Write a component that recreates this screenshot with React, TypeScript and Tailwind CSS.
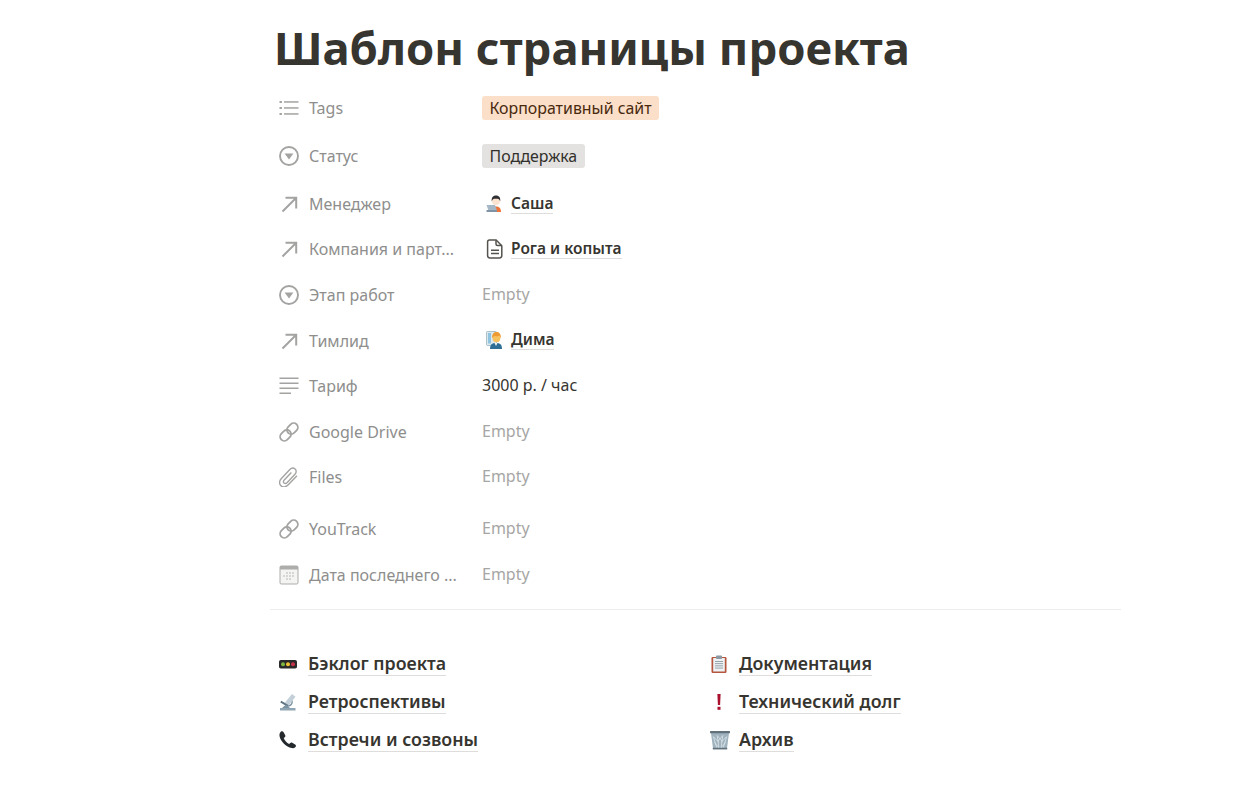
const gray = "#a3a3a1";

function ListIcon() {
  return (
    <svg viewBox="0 0 20 20" className="h-5 w-5" fill={gray}>
      <rect x="0.5" y="3" width="2.4" height="2" />
      <rect x="0.5" y="9" width="2.4" height="2" />
      <rect x="0.5" y="15" width="2.4" height="2" />
      <rect x="5" y="3.2" width="14.5" height="1.5" />
      <rect x="5" y="9.2" width="14.5" height="1.5" />
      <rect x="5" y="15.2" width="14.5" height="1.5" />
    </svg>
  );
}

function SelectIcon() {
  return (
    <svg viewBox="0 0 20 20" className="h-5 w-5" fill="none">
      <circle cx="10" cy="10" r="9" stroke={gray} strokeWidth="1.9" />
      <path d="M5.6 7.6h8.800L10 13.600z" fill={gray} />
    </svg>
  );
}

function ArrowIcon() {
  return (
    <svg viewBox="0 0 20 20" className="h-5 w-5" fill="none" stroke={gray} strokeWidth="2">
      <path d="M3.500 17.500 16.500 4.500M6.500 3.800h10.700v10.700" />
    </svg>
  );
}

function TextIcon() {
  return (
    <svg viewBox="0 0 20 20" className="h-5 w-5" fill={gray}>
      <rect x="0.5" y="1.5" width="19" height="1.5" />
      <rect x="0.5" y="6.5" width="19" height="1.5" />
      <rect x="0.5" y="11.5" width="19" height="1.5" />
      <rect x="0.5" y="16.5" width="11.5" height="1.5" />
    </svg>
  );
}

function LinkIcon() {
  return (
    <svg viewBox="0 0 20 20" className="h-5 w-5" fill="none" stroke={gray} strokeWidth="1.800">
      <rect x="7.400" y="2.400" width="12" height="8.400" rx="4.200" transform="rotate(-45 13.400 6.600)" />
      <rect x="0.600" y="9.200" width="12" height="8.400" rx="4.200" transform="rotate(-45 6.600 13.400)" />
    </svg>
  );
}

function ClipIcon() {
  return (
    <svg viewBox="1.500 1 17.500 17.500" className="h-5 w-5" fill="none" stroke={gray} strokeWidth="1.200">
      <path d="M17.200 8.600 9.400 16.800c-1.800 1.900-4.600 2.100-6.200.6-1.700-1.600-1.600-4.300.2-6.200l7.600-8c1.300-1.400 3.300-1.600 4.600-.4 1.300 1.200 1.200 3.200-.1 4.600l-7 7.300c-.8.800-1.900.9-2.600.3-.7-.7-.6-1.800.2-2.700l6.200-6.500" />
    </svg>
  );
}

function CalendarIcon() {
  return (
    <svg viewBox="0 0 20 20" className="h-5 w-5">
      <rect x="0.5" y="0.5" width="19" height="19" rx="2" fill="#adadab" />
      <rect x="1.500" y="4.500" width="17" height="14" fill="#f4f4f3" />
      <g fill="#d6d6d4">
        <rect x="7" y="7" width="2" height="2" />
        <rect x="10" y="7" width="2" height="2" />
        <rect x="13" y="7" width="2" height="2" />
        <rect x="4" y="10" width="2" height="2" />
        <rect x="7" y="10" width="2" height="2" />
        <rect x="10" y="10" width="2" height="2" />
        <rect x="13" y="10" width="2" height="2" />
        <rect x="7" y="13" width="2" height="2" />
        <rect x="10" y="13" width="2" height="2" />
      </g>
    </svg>
  );
}

function PageIcon() {
  return (
    <svg viewBox="0 0 20 20" className="h-5 w-5" fill="none" stroke="#55534e" strokeWidth="1.500">
      <path d="M4.500 1h6.600l5.700 5.800v9.800a2.400 2.400 0 0 1-2.400 2.400H5a2.400 2.400 0 0 1-2.400-2.400V3A2 2 0 0 1 4.500 1z" />
      <path d="M11 1.200v3.900a1.500 1.500 0 0 0 1.500 1.500h4.100M6 11.200h8M6 14.600h8" />
    </svg>
  );
}

function SashaEmoji() {
  return (
    <svg viewBox="0 0 18 18" className="h-[18px] w-[18px]">
      <path d="M5 17c0-4 2-5.500 5-5.500s5 1.500 5 5.500z" fill="#f0743a" />
      <circle cx="10" cy="6" r="4" fill="#fbe3d0" />
      <path d="M5.800 6.500C5 2 7.800.5 10 .5s5 1.500 4.200 6c-.5-1.700-1.500-2.500-2.500-2.700H8.300C7.300 4 6.300 4.800 5.800 6.500z" fill="#2f2f33" />
      <path d="M.5 10h8.500l2 5.500H2.500z" fill="#a5b6c4" />
      <rect x=".5" y="15" width="10.500" height="2" fill="#7f93a5" />
    </svg>
  );
}

function DimaEmoji() {
  return (
    <svg viewBox="0 0 18 18" className="h-[18px] w-[18px]">
      <rect x="0.500" y="0.500" width="10" height="14" rx="1" fill="#dbe8ee" stroke="#9cb4c0" strokeWidth="0.800" />
      <rect x="2" y="2" width="3" height="10.500" fill="#8fc3df" />
      <path d="M4 18c0-4.500 2-6 6-6s6 1.500 6 6z" fill="#2f6f96" />
      <path d="M8.500 12h3L10 15z" fill="#f4f4f4" />
      <circle cx="10.500" cy="7.500" r="3.800" fill="#f7c25e" />
      <path d="M6.200 7.500C5.500 2.800 8.300 1 10.500 1s5 1.800 4.300 6.500c-.5-1.500-1.200-2.500-2-2.800-1.500.7-3 .7-4.500.2-.9.500-1.600 1.300-2.100 2.600z" fill="#ed9a32" />
    </svg>
  );
}

function TrafficEmoji() {
  return (
    <svg viewBox="0 0 18 18" className="h-[18px] w-[18px]">
      <rect x="0" y="5" width="18" height="8.500" rx="1.800" fill="#2a2a2a" />
      <circle cx="4" cy="9.200" r="2" fill="#7fb83f" />
      <circle cx="9" cy="9.200" r="2" fill="#f1c232" />
      <circle cx="14" cy="9.200" r="2" fill="#c8334b" />
    </svg>
  );
}

function MicroscopeEmoji() {
  return (
    <svg viewBox="0 0 18 18" className="h-[18px] w-[18px]">
      <rect x="1" y="15" width="15.500" height="2.500" fill="#8fa5b4" />
      <path d="M7 13.500c3 .5 5.500-.5 6.500-2.800.6-1.500.3-3-.5-4.200l-1 1.200c.5 1 .5 2 0 2.800-.8 1.300-2.500 1.800-5 1.500z" fill="#7c93a3" />
      <path d="M6 9.500 13 1l3.500 2.700-7 8.800z" fill="#c3d0d9" />
      <rect x="1.500" y="9.500" width="8" height="1.800" transform="rotate(30 5 10)" fill="#5f7483" />
      <path d="M3 15 7 11.500 11 15z" fill="#7c93a3" />
    </svg>
  );
}

function PhoneEmoji() {
  return (
    <svg viewBox="0 0 18 18" className="h-[18px] w-[18px]">
      <path d="M1.800.8c1-.8 2.200-.5 2.800.5l1.600 2.900c.4.800.2 1.500-.4 2l-1.100.9c.8 2.400 3.200 5 5.400 6l1.200-1.100c.6-.6 1.300-.7 2-.3l2.800 1.700c1 .6 1.200 1.700.4 2.500-1 1.100-2.300 1.500-3.800 1.200C7 16 1.800 10.500.6 5.500.2 3.500.6 1.800 1.800.8z" fill="#24292e" />
    </svg>
  );
}

function ClipboardEmoji() {
  return (
    <svg viewBox="0 0 18 18" className="h-[18px] w-[18px]">
      <rect x="1.500" y="2" width="15" height="16" rx="1.200" fill="#b5573f" />
      <rect x="3.200" y="3" width="11.600" height="13.500" fill="#eef2f4" />
      <rect x="6" y="0.500" width="6" height="3.500" rx="0.800" fill="#8d9aa3" />
      <g fill="#8d9aa3">
        <rect x="5" y="6" width="8" height="0.900" />
        <rect x="5" y="8.200" width="8" height="0.900" />
        <rect x="5" y="10.400" width="8" height="0.900" />
        <rect x="5" y="12.600" width="8" height="0.900" />
      </g>
    </svg>
  );
}

function ExclamationEmoji() {
  return (
    <svg viewBox="0 0 18 18" className="h-[18px] w-[18px]">
      <path d="M7.400 1h3.200l-.5 11H7.900z" fill="#a8102d" />
      <rect x="7.500" y="13.800" width="3" height="3" fill="#a8102d" />
    </svg>
  );
}

function BasketEmoji() {
  return (
    <svg viewBox="0 0 18 18" className="h-5 w-5">
      <path d="M.8 2h16.400l-2 15H2.800z" fill="#9fb2be" />
      <path d="M3 6l3 10M6.500 5l1.500 11M11.500 5 10 16M15 6l-3 10M3 6l5 5M15 6l-5 5M6.500 5 11 10M11.500 5 7 10M4 11l4 5M14 11l-4 5" stroke="#e6edf0" strokeWidth="0.600" fill="none" />
      <rect x="0" y="1" width="18" height="2" rx="0.500" fill="#62727d" />
      <rect x="2.500" y="16" width="13" height="1.500" fill="#62727d" />
    </svg>
  );
}

function Tag({ text, color }: { text: string; color: string }) {
  return <span className={`h-6 rounded-[3px] px-[7.500px] text-[15.900px] leading-6 ${color}`}>{text}</span>;
}

function Empty() {
  return <span className="mb-[2px] text-[16px] text-[#a6a6a5]">Empty</span>;
}

function Mention({ icon, text, raised }: { icon: React.ReactNode; text: string; raised?: boolean }) {
  return (
    <span className={raised ? "mb-[2px] flex items-center" : "flex items-center"}>
      <span className="flex w-[29px] justify-center pr-[3px]">{icon}</span>
      <span className="border-b border-[#dedddb] text-[15.500px] font-semibold leading-[20px] text-[#37352f]">{text}</span>
    </span>
  );
}

const rows = [
  { icon: <ListIcon />, label: "Tags", gap: "mt-[0px]", value: <Tag text="Корпоративный сайт" color="bg-[#fbdfc9] text-[#49290e]" /> },
  { icon: <SelectIcon />, label: "Статус", gap: "mt-[3px]", value: <Tag text="Поддержка" color="bg-[#e3e2e0] text-[#32302c]" /> },
  { icon: <ArrowIcon />, label: "Менеджер", gap: "mt-[3px]", value: <Mention icon={<SashaEmoji />} text="Саша" /> },
  { icon: <ArrowIcon />, label: "Компания и парт...", gap: "mt-0", value: <Mention icon={<PageIcon />} text="Рога и копыта" /> },
  { icon: <SelectIcon />, label: "Этап работ", gap: "mt-[1px]", value: <Empty /> },
  { icon: <ArrowIcon />, label: "Тимлид", gap: "mt-[1px]", value: <Mention raised icon={<DimaEmoji />} text="Дима" /> },
  { icon: <TextIcon />, label: "Тариф", gap: "mt-0", value: <span className="mb-[2px] text-[16px] text-[#37352f]">3000 р. / час</span> },
  { icon: <LinkIcon />, label: "Google Drive", gap: "mt-[1px]", value: <Empty /> },
  { icon: <ClipIcon />, label: "Files", gap: "mt-0", value: <Empty /> },
  { icon: <LinkIcon />, label: "YouTrack", gap: "mt-[7px]", value: <Empty /> },
  { icon: <CalendarIcon />, label: "Дата последнего ...", gap: "mt-[1px]", value: <Empty /> },
];

const links = [
  { icon: <TrafficEmoji />, text: "Бэклог проекта" },
  { icon: <ClipboardEmoji />, text: "Документация" },
  { icon: <MicroscopeEmoji />, text: "Ретроспективы" },
  { icon: <ExclamationEmoji />, text: "Технический долг" },
  { icon: <PhoneEmoji />, text: "Встречи и созвоны" },
  { icon: <BasketEmoji />, text: "Архив" },
];

export default function App() {
  return (
    <div className="min-h-[790px] bg-white pl-[270px] font-['Noto_Sans','Open_Sans',sans-serif] text-[#37352f]">
      <div className="w-[851px]">
        <h1 className="h-[85px] pl-[4px] pt-[14px] text-[45.400px] font-bold leading-[66px]">Шаблон страницы проекта</h1>
        <div className="pl-[9px]">
          {rows.map((row) => (
            <div key={row.label} className={`flex h-[45px] items-center ${row.gap}`}>
              <span className="flex w-[30px] shrink-0">{row.icon}</span>
              <span className="w-[173px] shrink-0 text-[16px] text-[#8e8e8d]">{row.label}</span>
              {row.value}
            </div>
          ))}
        </div>
        <div className="mt-[12px] border-t border-[#ededec]" />
        <div className="mt-[40px] grid grid-cols-[431px_1fr] gap-y-[11px] pl-[9px]">
          {links.map((link) => (
            <div key={link.text} className="flex h-[27px] items-center">
              <span className="flex w-[29px] shrink-0">{link.icon}</span>
              <span className="border-b border-[#dedddb] text-[17.800px] font-semibold leading-[24px] text-[#37352f]">{link.text}</span>
            </div>
          ))}
        </div>
      </div>
    </div>
  );
}
